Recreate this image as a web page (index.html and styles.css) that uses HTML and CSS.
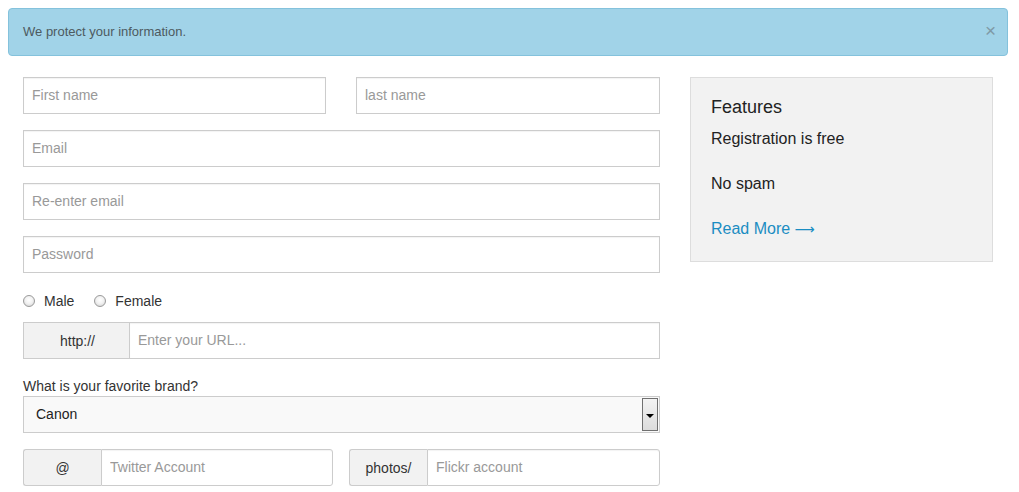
FILE: index.html
```html
<!DOCTYPE html>
<html lang="en">
<head>
<meta charset="utf-8">
<title>Sign up</title>
<link rel="stylesheet" href="styles.css">
</head>
<body>
<div class="page">
  <div class="alert">
    <span class="alert-text">We protect your information.</span>
    <span class="alert-close">×</span>
  </div>
  <div class="layout">
    <form class="form">
      <div class="row-two">
        <input class="field" type="text" placeholder="First name">
        <input class="field" type="text" placeholder="last name">
      </div>
      <input class="field" type="text" placeholder="Email">
      <input class="field" type="text" placeholder="Re-enter email">
      <input class="field" type="password" placeholder="Password">
      <div class="radios">
        <label class="radio"><span class="radio-dot"></span>Male</label>
        <label class="radio"><span class="radio-dot"></span>Female</label>
      </div>
      <div class="group">
        <span class="addon addon-http">http://</span>
        <input class="field field-in-group" type="text" placeholder="Enter your URL...">
      </div>
      <div class="select-block">
        <div class="select-label">What is your favorite brand?</div>
        <div class="select">
          <span class="select-value">Canon</span>
          <span class="select-btn"><span class="select-arrow"></span></span>
        </div>
      </div>
      <div class="row-groups">
        <div class="group group-round">
          <span class="addon addon-at">@</span>
          <input class="field field-in-group" type="text" placeholder="Twitter Account">
        </div>
        <div class="group group-round">
          <span class="addon addon-photos">photos/</span>
          <input class="field field-in-group" type="text" placeholder="Flickr account">
        </div>
      </div>
    </form>
    <aside class="features">
      <h3 class="features-title">Features</h3>
      <p class="features-item">Registration is free</p>
      <p class="features-item">No spam</p>
      <a class="features-link" href="#">Read More <span class="arrow">⟶</span></a>
    </aside>
  </div>
</div>
</body>
</html>
```

FILE: styles.css
```css
* { box-sizing: border-box; }

body {
  margin: 8px;
  font-family: "Liberation Sans", Arial, sans-serif;
  color: #333;
  background: #fff;
}

.page {
  width: 1000px;
}

.alert {
  display: flex;
  align-items: center;
  justify-content: space-between;
  height: 48px;
  padding: 0 14px;
  background: #a1d3e8;
  border: 1px solid #84c2dc;
  border-radius: 4px;
  font-size: 13px;
  color: #4d5a60;
}

.alert-text { padding-bottom: 1px; }

.alert-close {
  font-size: 19px;
  line-height: 1;
  color: #7f9aa6;
  margin-right: -3px;
  margin-top: -4px;
}

.layout {
  display: grid;
  grid-template-columns: 637px 303px;
  column-gap: 30px;
  margin-top: 21px;
  padding-left: 15px;
  align-items: start;
}

.form {
  display: flex;
  flex-direction: column;
  gap: 16px;
}

.row-two {
  display: grid;
  grid-template-columns: 303px 304px;
  column-gap: 30px;
}

.field {
  display: block;
  width: 100%;
  height: 37px;
  padding: 0 8px 1px;
  border: 1px solid #ccc;
  border-radius: 0;
  box-shadow: inset 0 1px 1px rgba(0,0,0,0.05);
  font-family: inherit;
  font-size: 14px;
  color: #333;
  background: #fff;
  outline: none;
}

.field::placeholder { color: #999; }

.radios {
  display: flex;
  gap: 20px;
  height: 20px;
  margin-top: 2px;
  margin-bottom: -5px;
  font-size: 14px;
}

.radio {
  display: flex;
  align-items: center;
  gap: 9px;
  line-height: 20px;
}

.radio-dot {
  width: 12px;
  height: 12px;
  border-radius: 50%;
  border: 1px solid #9a9a9a;
  background: radial-gradient(circle at 50% 40%, #fff 0%, #f2f2f2 45%, #cfcfcf 100%);
}

.group {
  display: flex;
  height: 37px;
}

.addon {
  flex: none;
  display: flex;
  align-items: center;
  justify-content: center;
  background: #f2f2f2;
  border: 1px solid #ccc;
  border-right: none;
  font-size: 14px;
  color: #333;
}

.addon-http { width: 106px; padding-left: 2px; }
.addon-at { width: 78px; }
.addon-photos { width: 78px; }

.field-in-group {
  flex: 1;
  width: auto;
  min-width: 0;
}

.group-round .addon { border-radius: 3px 0 0 3px; }
.group-round .field { border-radius: 0 3px 3px 0; }

.select-block {
  margin-top: 2px;
}

.select-label {
  font-size: 14px;
  line-height: 18px;
  height: 19px;
  color: #333;
}

.select {
  display: flex;
  align-items: center;
  height: 37px;
  padding: 1px 1px 1px 12px;
  border: 1px solid #ccc;
  background: #f9f9f9;
  font-size: 14px;
  color: #222;
}

.select-value { flex: 1; padding-bottom: 1px; }

.select-btn {
  flex: none;
  display: flex;
  align-items: center;
  justify-content: center;
  width: 16px;
  height: 100%;
  border: 1px solid #707070;
  background: linear-gradient(#f3f3f3, #dcdcdc);
  padding-top: 2px;
}

.select-arrow {
  width: 0;
  height: 0;
  border-left: 4px solid transparent;
  border-right: 4px solid transparent;
  border-top: 4px solid #000;
}

.row-groups {
  display: grid;
  grid-template-columns: 310px 311px;
  column-gap: 16px;
  margin-top: 0;
}

.features {
  background: #f2f2f2;
  border: 1px solid #ddd;
  padding: 18px 20px 21px;
  height: 185px;
}

.features-title {
  margin: 0 0 11px;
  font-size: 18px;
  font-weight: normal;
  line-height: 22px;
  color: #222;
}

.features-item {
  margin: 0 0 25px;
  font-size: 16px;
  line-height: 20px;
  color: #222;
}

.features-link {
  display: block;
  font-size: 16px;
  line-height: 20px;
  color: #1b8dc2;
  text-decoration: none;
}

.arrow {
  font-family: "DejaVu Sans", sans-serif;
  font-size: 14px;
}
```
